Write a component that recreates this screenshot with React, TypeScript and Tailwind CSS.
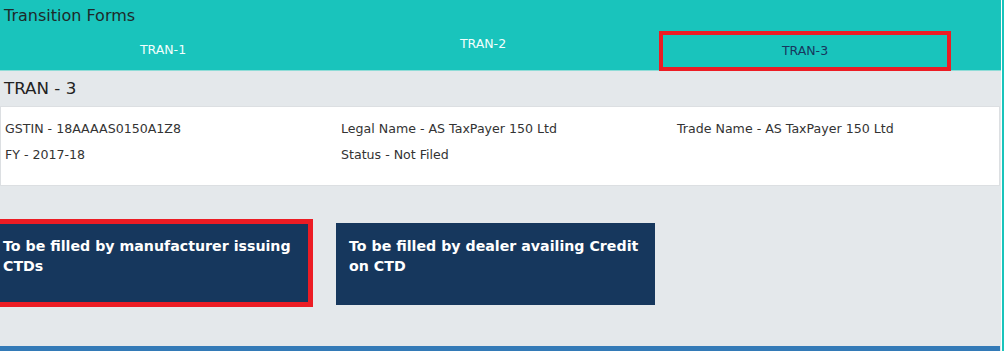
import React from 'react';

const font = { fontFamily: '"DejaVu Sans", Verdana, sans-serif' };

const Tab: React.FC<{ label: string; active?: boolean; raised?: boolean }> = ({ label, active, raised }) => {
  if (active) {
    return (
      <div className="w-[320px] flex pl-[16px] pr-[12px]">
        <div className="relative z-10 -mb-[1px] flex-1 h-[40px] border-[4px] border-[#ec1c24] flex items-center justify-center text-[12.5px] text-[#17375e]">
          {label}
        </div>
      </div>
    );
  }
  return (
    <div
      className={
        raised
          ? 'w-[320px] flex justify-center pt-[5px] leading-[15px] text-[12.5px] text-[#f2fffe]'
          : 'w-[320px] flex items-center justify-center text-[12.5px] text-[#f2fffe]'
      }
    >
      {label}
    </div>
  );
};

const ActionCard: React.FC<{ text: string; selected?: boolean }> = ({ text, selected }) => (
  <button
    className={
      selected
        ? '-ml-[15px] w-[328px] h-[88px] border-[5px] border-[#ec1c24] bg-[#16375d] pl-[13px] pr-[10px] pt-[12px] text-left'
        : 'mt-[4px] w-[319px] h-[82px] bg-[#16375d] pl-[13px] pr-[10px] pt-[13px] text-left'
    }
  >
    <div className="flex flex-col h-full">
      <span className="text-[14.2px] leading-[20px] font-bold text-white">{text}</span>
    </div>
  </button>
);

export default function App() {
  return (
    <div className="w-[1004px] h-[351px] flex bg-white overflow-hidden" style={font}>
      <div className="w-[1001px] flex flex-col bg-[#e4e8eb]">
        {/* Header with form tabs */}
        <div className="bg-[#19c4bc] border-b border-[#8fdcd7]">
          <div className="h-[31px] pl-[4px] pt-[6px] leading-[20px] text-[16px] text-[#1e2a2a]">
            Transition Forms
          </div>
          <div className="h-[39px] flex pl-[3px]">
            <Tab label="TRAN-1" />
            <Tab label="TRAN-2" raised />
            <Tab label="TRAN-3" active />
          </div>
        </div>

        {/* Title */}
        <div className="h-[35px] flex items-center pl-[4px] text-[16.7px] text-[#222]">TRAN - 3</div>

        {/* Taxpayer details */}
        <div className="h-[80px] mr-[1px] bg-white border border-[#dcdfe2] pt-[12px] pl-[4px] text-[12.6px] leading-[20px] text-[#333]">
          <div className="grid grid-cols-[336px_336px_1fr] gap-y-[6px]">
            <div>GSTIN - 18AAAAS0150A1Z8</div>
            <div>Legal Name - AS TaxPayer 150 Ltd</div>
            <div>Trade Name - AS TaxPayer 150 Ltd</div>
            <div>FY - 2017-18</div>
            <div>Status - Not Filed</div>
            <div></div>
          </div>
        </div>

        {/* Options */}
        <div className="flex items-start gap-[23px] mt-[33px]">
          <ActionCard text="To be filled by manufacturer issuing CTDs" selected />
          <ActionCard text="To be filled by dealer availing Credit on CTD" />
        </div>

        <div className="mt-auto h-[5px] mr-[1px] bg-[#337ab7]" />
      </div>
      <div className="w-[1px] bg-white" />
      <div className="w-[2px] bg-[#19c4bc]" />
    </div>
  );
}
